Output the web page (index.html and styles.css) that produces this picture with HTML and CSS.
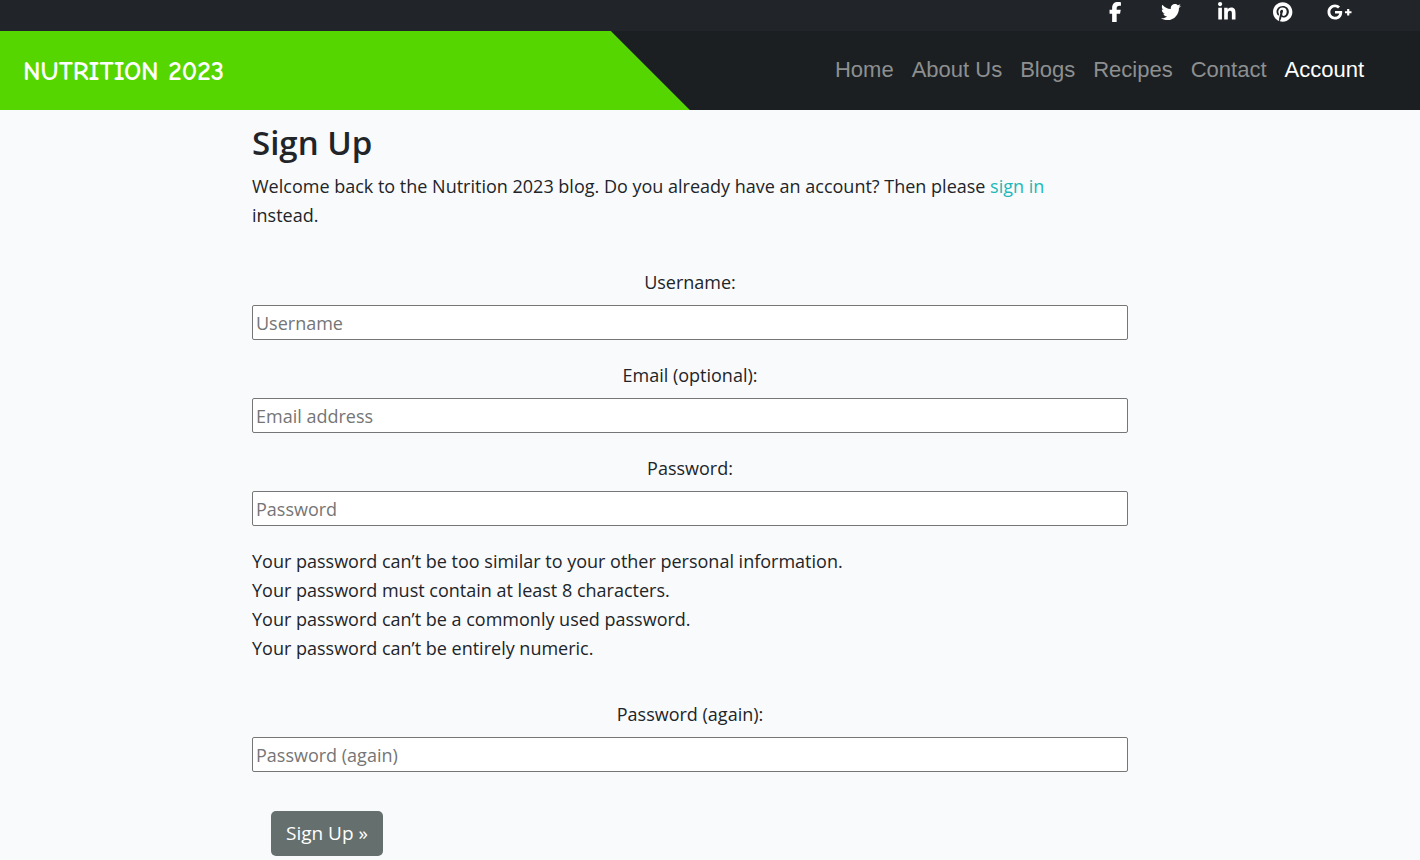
FILE: index.html
```html
<!DOCTYPE html>
<html lang="en">
<head>
<meta charset="utf-8">
<meta name="viewport" content="width=device-width, initial-scale=1">
<title>Sign Up - Nutrition 2023</title>
<link rel="stylesheet" href="styles.css">
</head>
<body>
<div class="topbar">
  <a class="social" href="#" aria-label="Facebook"><svg viewBox="0 0 320 512"><path d="M80 299.3V512H196V299.3h86.500l18-97.800H196V166.900c0-51.700 20.300-71.500 72.700-71.500c16.300 0 29.400 .4 37 1.200V7.900C291.400 4 256.400 0 236.200 0C129.300 0 80 50.500 80 159.400v42.100H14v97.800H80z"/></svg></a>
  <a class="social" href="#" aria-label="Twitter"><svg viewBox="0 0 512 512"><path d="M459.37 151.716c.325 4.548.325 9.097.325 13.645 0 138.72-105.583 298.558-298.558 298.558-59.452 0-114.68-17.219-161.137-47.106 8.447.974 16.568 1.299 25.34 1.299 49.055 0 94.213-16.568 130.274-44.832-46.132-.975-84.792-31.188-98.112-72.772 6.498.974 12.995 1.624 19.818 1.624 9.421 0 18.843-1.3 27.614-3.573-48.081-9.747-84.143-51.98-84.143-102.985v-1.299c13.969 7.797 30.214 12.67 47.431 13.319-28.264-18.843-46.781-51.005-46.781-87.391 0-19.492 5.197-37.36 14.294-52.954 51.655 63.675 129.3 105.258 216.365 109.807-1.624-7.797-2.599-15.918-2.599-24.04 0-57.828 46.782-104.934 104.934-104.934 30.213 0 57.502 12.67 76.67 33.137 23.715-4.548 46.456-13.32 66.599-25.34-7.798 24.366-24.366 44.833-46.132 57.827 21.117-2.273 41.584-8.122 60.426-16.243-14.292 20.791-32.161 39.308-52.628 54.253z"/></svg></a>
  <a class="social" href="#" aria-label="LinkedIn"><svg viewBox="0 0 448 512"><path d="M100.28 448H7.4V148.9h92.88zM53.79 108.1C24.09 108.1 0 83.5 0 53.8a53.79 53.79 0 0 1 107.58 0c0 29.7-24.1 54.3-53.79 54.3zM447.9 448h-92.68V302.4c0-34.7-.7-79.2-48.29-79.2-48.29 0-55.69 37.7-55.69 76.7V448h-92.78V148.9h89.08v40.8h1.3c12.4-23.5 42.69-48.3 87.88-48.3 94 0 111.28 61.9 111.28 142.3V448z"/></svg></a>
  <a class="social" href="#" aria-label="Pinterest"><svg viewBox="0 0 496 512"><path d="M496 256c0 137-111 248-248 248-25.6 0-50.2-3.9-73.4-11.1 10.1-16.5 25.2-43.5 30.8-65 3-11.6 15.4-59 15.4-59 8.1 15.4 31.7 28.5 56.8 28.5 74.8 0 128.7-68.8 128.7-154.3 0-81.9-66.9-143.2-152.9-143.2-107 0-163.9 71.8-163.9 150.1 0 36.4 19.4 81.7 50.3 96.1 4.7 2.2 7.2 1.2 8.3-3.3.8-3.4 5-20.3 6.9-28.1.6-2.5.3-4.7-1.7-7.1-10.1-12.5-18.3-35.3-18.3-56.6 0-54.7 41.4-107.6 112-107.6 60.9 0 103.6 41.5 103.6 100.9 0 67.1-33.9 113.6-78 113.6-24.3 0-42.6-20.1-36.7-44.8 7-29.5 20.5-61.3 20.5-82.6 0-19-10.2-34.9-31.4-34.9-24.9 0-44.9 25.7-44.9 60.2 0 22 7.4 36.8 7.4 36.8s-24.5 103.8-29 123.2c-5 21.4-3 51.6-.9 71.2C65.4 450.9 0 361.1 0 256 0 119 111 8 248 8s248 111 248 248z"/></svg></a>
  <a class="social" href="#" aria-label="Google Plus"><svg viewBox="0 0 640 512"><path d="M386.061 228.496c1.834 9.692 3.143 19.384 3.143 31.956C389.204 370.205 315.599 448 204.8 448c-106.084 0-192-85.915-192-192s85.916-192 192-192c51.864 0 95.083 18.859 128.611 50.292l-52.126 50.03c-14.145-13.621-39.028-29.599-76.485-29.599-65.484 0-118.92 54.221-118.92 121.277 0 67.056 53.436 121.277 118.92 121.277 75.961 0 104.513-54.745 108.965-82.773H204.8v-66.009h181.261zm185.406 6.437V179.2h-56.001v55.733h-55.733v56.001h55.733v55.733h56.001v-55.733H627.2v-56.001h-55.733z"/></svg></a>
</div>
<header class="navbar">
  <div class="brand-panel"><a class="brand" href="#">NUTRITION 2023</a></div>
  <nav class="menu">
    <a class="menu-link" href="#">Home</a>
    <a class="menu-link" href="#">About Us</a>
    <a class="menu-link" href="#">Blogs</a>
    <a class="menu-link" href="#">Recipes</a>
    <a class="menu-link" href="#">Contact</a>
    <a class="menu-link active" href="#">Account</a>
  </nav>
</header>
<main class="page">
  <div class="content">
    <h1 class="title">Sign Up</h1>
    <p class="intro">Welcome back to the Nutrition 2023 blog. Do you already have an account? Then please <a class="link" href="#">sign in</a> instead.</p>
    <form class="form">
      <div class="field">
        <label class="label" for="username">Username:</label>
        <input class="input" id="username" type="text" placeholder="Username">
      </div>
      <div class="field">
        <label class="label" for="email">Email (optional):</label>
        <input class="input" id="email" type="email" placeholder="Email address">
      </div>
      <div class="field">
        <label class="label" for="password1">Password:</label>
        <input class="input" id="password1" type="password" placeholder="Password">
      </div>
      <ul class="hints">
        <li>Your password can’t be too similar to your other personal information.</li>
        <li>Your password must contain at least 8 characters.</li>
        <li>Your password can’t be a commonly used password.</li>
        <li>Your password can’t be entirely numeric.</li>
      </ul>
      <div class="field">
        <label class="label" for="password2">Password (again):</label>
        <input class="input" id="password2" type="password" placeholder="Password (again)">
      </div>
      <button class="submit" type="button">Sign Up »</button>
    </form>
  </div>
</main>
</body>
</html>
```
FILE: styles.css
```css
* {
  box-sizing: border-box;
}

body {
  margin: 0;
  background: #f9fafc;
  color: #212529;
  font-family: "Segoe UI", "Open Sans", "Noto Sans", sans-serif;
  font-size: 18px;
  font-weight: 400;
  line-height: 29px;
}

.topbar {
  display: flex;
  justify-content: flex-end;
  padding: 2px 53px 9px 0;
  background: #212529;
}

.social {
  display: flex;
  justify-content: center;
  width: 56px;
}

.social svg {
  height: 20px;
  fill: #fff;
}

.navbar {
  display: flex;
  justify-content: space-between;
  background: #1b1f22;
}

.brand-panel {
  width: 49%;
  padding: 26px 23px 24px;
  background: #55d600;
  clip-path: polygon(0 0, calc(100% - 85px) 0, calc(100% - 6px) 100%, 0 100%);
}

.brand {
  display: block;
  color: #fff;
  font-family: "Comic Sans MS", "Comic Neue", "Open Sans", sans-serif;
  font-size: 27px;
  font-weight: 700;
  text-decoration: none;
}

.menu {
  display: flex;
  gap: 18px;
  padding: 24px 56px 26px 0;
}

.menu-link {
  color: #8d8f90;
  font-family: Arial, "Liberation Sans", sans-serif;
  font-size: 22px;
  font-weight: 400;
  text-decoration: none;
}

.menu-link.active {
  color: #fff;
}

.page {
  padding: 12px 40px 4px 0;
}

.content {
  max-width: 876px;
  margin: 0 auto;
}

.title {
  margin: 0 0 9px;
  font-size: 33px;
  font-weight: 600;
  line-height: 41px;
}

.intro {
  max-width: 840px;
  margin: 0 0 38px;
}

.link {
  color: #20b8b8;
  text-decoration: none;
}

.field {
  margin-bottom: 21px;
}

.label {
  display: block;
  margin-bottom: 8px;
  text-align: center;
}

.input {
  display: block;
  width: 100%;
  height: 35px;
  padding: 1px 3px;
  border: 1px solid #767676;
  border-radius: 2px;
  background: #fff;
  color: #212529;
  font: inherit;
}

.input::placeholder {
  color: #757575;
}

.hints {
  margin: 0 0 37px;
  padding: 0;
  list-style: none;
}

.submit {
  display: block;
  margin: 39px 0 0 19px;
  padding: 8px 15px;
  border: 0;
  border-radius: 5px;
  background: #656f6e;
  color: #fff;
  font: inherit;
  font-size: 19px;
}
```
